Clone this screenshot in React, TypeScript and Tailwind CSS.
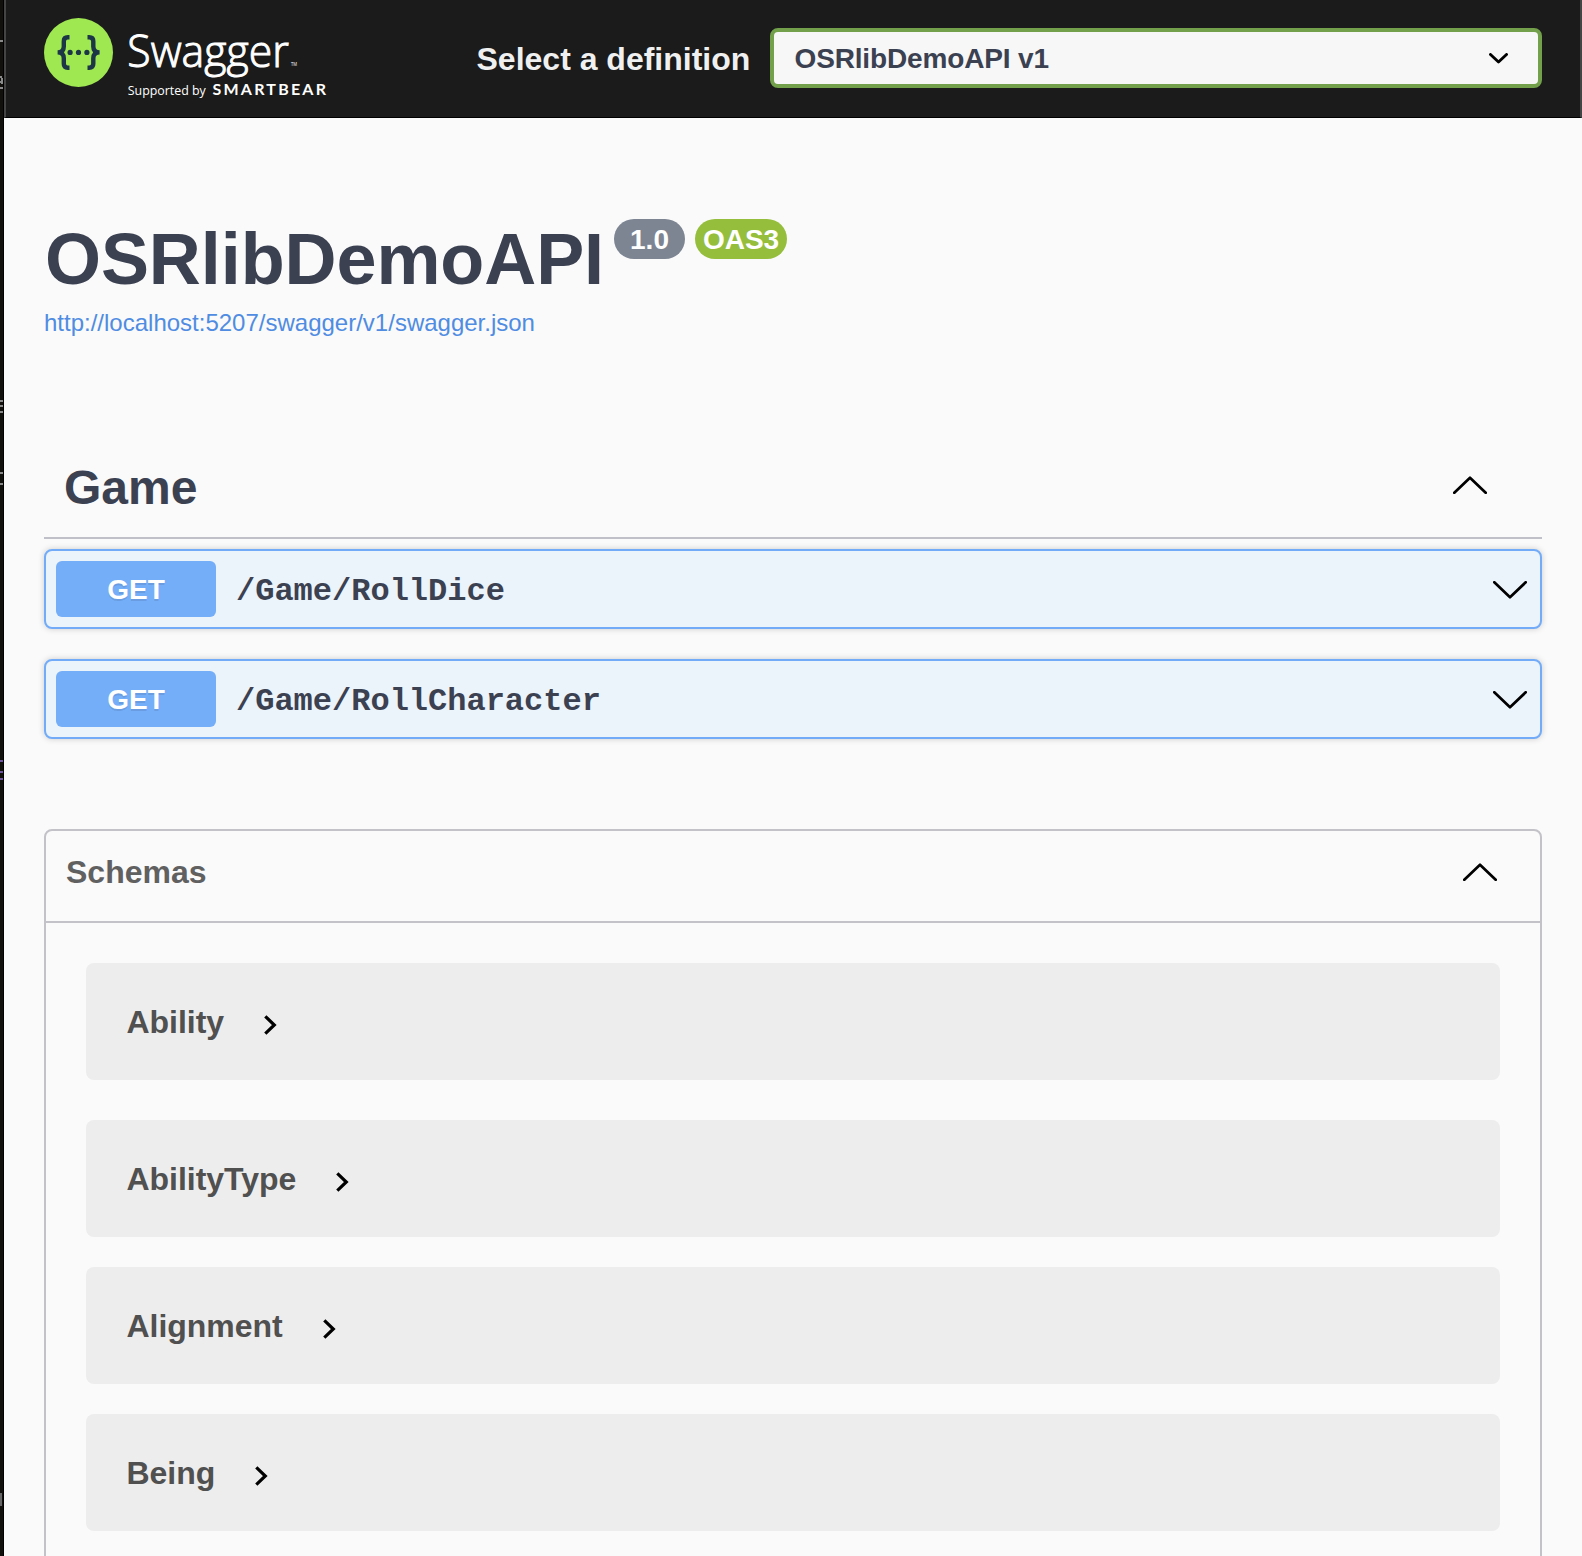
import React from "react";

type ChevronProps = { up?: boolean; className?: string };

function Chevron({ up = false, className = "" }: ChevronProps) {
  return (
    <svg className={`h-[18px] w-[34px] shrink-0 ${className}`} viewBox="0 0 34 18" fill="none">
      <path
        d={up ? "M1.3 16.7 L17 1.7 L32.7 16.7" : "M1.3 1.3 L17 16.3 L32.7 1.3"}
        stroke="#000"
        strokeWidth="2.7"
        strokeLinecap="round"
        strokeLinejoin="round"
      />
    </svg>
  );
}

function Logo() {
  return (
    <svg className="h-[84px] w-[284px] shrink-0" viewBox="44 18 284 84">
      <circle cx="78.5" cy="52.5" r="34.5" fill="#9fe852" />
      <g fill="none" stroke="#1d3647" strokeWidth="4.4">
        <path d="M69.5 37.2 H67.8 Q63.8 37.2 63.8 41.2 V46.5 Q63.8 52.4 57.6 52.4 Q63.8 52.4 63.8 58.3 V63.8 Q63.8 67.7 67.8 67.7 H69.5" />
        <path d="M87.5 37.2 H89.2 Q93.3 37.2 93.3 41.2 V46.5 Q93.3 52.4 99.6 52.4 Q93.3 52.4 93.3 58.3 V63.8 Q93.3 67.7 89.2 67.7 H87.5" />
      </g>
      <g fill="#1d3647">
        <circle cx="70.1" cy="52.4" r="2.6" />
        <circle cx="78.5" cy="52.4" r="2.6" />
        <circle cx="86.9" cy="52.4" r="2.6" />
      </g>
      <g fill="#fff" fontFamily="'Open Sans', 'Noto Sans', sans-serif">
        <text x="127.3" y="66.8" fontSize="44.5" fontWeight="300" stroke="#fff" strokeWidth="1" textLength="161.5" lengthAdjust="spacingAndGlyphs">
          Swagger
        </text>
        <text x="291" y="66" fontSize="4.5" textLength="6" lengthAdjust="spacingAndGlyphs">TM</text>
        <text x="127.8" y="94.8" fontSize="12.4" textLength="78" lengthAdjust="spacing">
          Supported by
        </text>
        <text x="212.5" y="94.8" fontSize="16" fontWeight="700" textLength="113.5" lengthAdjust="spacing" fontFamily="Lato, 'Open Sans', sans-serif">
          SMARTBEAR
        </text>
      </g>
    </svg>
  );
}

function EdgeStrip() {
  return (
    <svg className="h-[1556px] w-1 shrink-0" viewBox="0 0 4 1556">
      <rect width="4" height="1556" fill="#12100d" />
      <rect x="3" width="1" height="1556" fill="#000" />
      <g fill="#8a8a8a">
        <rect y="40" width="3" height="2" />
        <rect y="76" width="2" height="2" />
        <rect x="1" y="78" width="2" height="6" />
        <rect y="81" width="2" height="2" />
        <rect y="87" width="3" height="2" />
        <rect y="400" width="3" height="2" />
        <rect y="405" width="3" height="2" />
        <rect y="411" width="3" height="2" />
        <rect y="472" width="3" height="2" />
        <rect y="483" width="3" height="2" />
        <rect y="1493" width="2" height="13" fill="#666" />
      </g>
      <g fill="#6f55a0">
        <rect y="760" width="3" height="2" />
        <rect y="771" width="3" height="2" />
        <rect y="778" width="3" height="2" />
      </g>
    </svg>
  );
}

function Header() {
  return (
    <header className="flex h-[118px] items-start border-x-2 border-b border-x-[#444] border-b-black bg-[#1b1b1b] pt-[18px] pl-[38px] pr-[38px]">
      <Logo />
      <label className="mt-2.5 ml-[148.5px] text-[32px] leading-[62px] font-bold whitespace-nowrap text-[#f0f0f0]">
        Select a definition
      </label>
      <div className="mt-2.5 ml-auto flex h-[60px] w-[772px] items-center justify-between rounded-lg border-4 border-[#72a04b] bg-[#f7f7f7] pr-[30px] pl-[20.5px]">
        <span className="mt-px text-[28px] leading-none font-bold tracking-[-0.15px] text-[#3b4151]">OSRlibDemoAPI v1</span>
        <svg className="mt-px h-[11px] w-[19px]" viewBox="0 0 19 11" fill="none">
          <path d="M1.5 1.5 L9.5 9 L17.5 1.5" stroke="#000" strokeWidth="2.9" strokeLinecap="round" strokeLinejoin="round" />
        </svg>
      </div>
    </header>
  );
}

function Operation({ method, path }: { method: string; path: string }) {
  return (
    <div className="flex h-20 items-center rounded-lg border-2 border-[#72acf9] bg-[#ebf3fb] pr-[13px] pl-2.5 shadow-[0_0_6px_rgba(0,0,0,0.19)]">
      <span className="flex h-14 w-40 items-center justify-center rounded-md bg-[#74adf8] pt-px text-[28px] leading-none font-bold text-white [text-shadow:0_2px_0_rgba(0,0,0,0.1)]">
        {method}
      </span>
      <span className="mt-1.5 ml-5 font-['Liberation_Mono',monospace] text-[32px] leading-none font-bold text-[#3b4151]">
        {path}
      </span>
      <Chevron className="mt-0.5 ml-auto" />
    </div>
  );
}

function Model({ name }: { name: string }) {
  return (
    <div className="flex h-[117px] items-center rounded-lg bg-[#ededed] pl-[40.5px]">
      <span className="text-[32px] leading-9 font-bold tracking-[-0.03px] text-[#505050]">{name}</span>
      <svg className="mt-[7px] ml-10 h-5 w-[13px]" viewBox="0 0 13 20" fill="none">
        <path d="M1.3 1.3 L10.3 10 L1.3 18.7" stroke="#000" strokeWidth="3.2" />
      </svg>
    </div>
  );
}

export default function App() {
  return (
    <div className="flex h-[1556px] w-[1582px] overflow-hidden bg-[#fafafa] font-['Liberation_Sans',Arial,sans-serif]">
      <EdgeStrip />
      <div className="min-w-0 flex-1">
        <Header />
        <main className="pr-10 pl-10">
          <section className="h-[328px] pt-[101px]">
            <div className="flex items-start">
              <h1 className="w-[560px] pl-px text-[72px] leading-20 font-bold tracking-[-0.08px] text-[#3b4151]">OSRlibDemoAPI</h1>
              <span className="ml-2.5 flex h-10 w-[71px] items-center justify-center rounded-full bg-[#7d8492] pt-px text-[28px] leading-none font-bold text-white">
                1.0
              </span>
              <span className="ml-2.5 flex h-10 w-[92px] items-center justify-center rounded-full bg-[#95be3c] pt-px text-[28px] leading-none font-bold text-white">
                OAS3
              </span>
            </div>
            <a className="mt-2 block text-[24px] leading-8 text-[#4f8ce2]">http://localhost:5207/swagger/v1/swagger.json</a>
          </section>

          <section>
            <div className="flex h-[93px] items-start justify-between border-b-2 border-[#c0c0c8] pr-[55px] pl-5">
              <h2 className="pt-3 text-[48px] leading-[60px] font-bold text-[#3b4151]">Game</h2>
              <Chevron up className="mt-[30px]" />
            </div>
            <div className="mt-2.5 flex flex-col gap-[30px]">
              <Operation method="GET" path="/Game/RollDice" />
              <Operation method="GET" path="/Game/RollCharacter" />
            </div>
          </section>

          <section className="mt-[90px] h-[800px] rounded-lg border-2 border-[#c2c2c8]">
            <div className="flex h-23 items-start justify-between border-b-2 border-[#c2c2c8] pr-[43px] pl-5">
              <h3 className="pt-5 text-[32px] leading-[42px] font-bold text-[#606060]">Schemas</h3>
              <Chevron up className="mt-8" />
            </div>
            <div className="px-10 pt-10">
              <Model name="Ability" />
              <div className="mt-10 flex flex-col gap-[30px]">
                <Model name="AbilityType" />
                <Model name="Alignment" />
                <Model name="Being" />
              </div>
            </div>
          </section>
        </main>
      </div>
    </div>
  );
}
